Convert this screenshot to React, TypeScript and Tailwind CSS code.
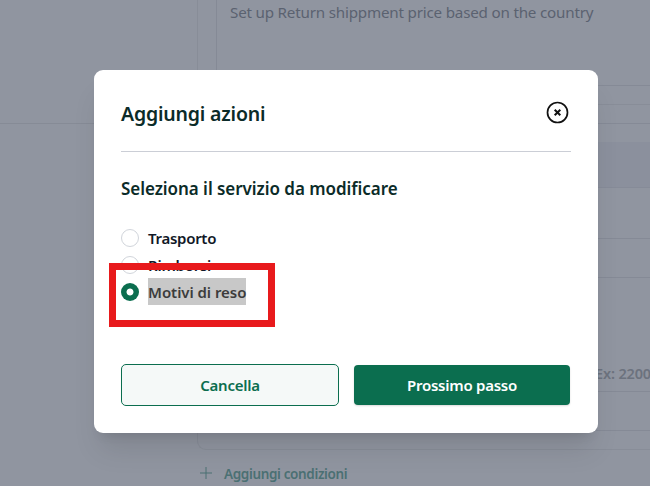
import { useState } from "react";

const services = [
  { id: "shipping", label: "Trasporto", text: "tracking-[-0.28px]" },
  { id: "refunds", label: "Rimborsi", text: "tracking-[-0.25px]" },
  { id: "reasons", label: "Motivi di reso", text: "tracking-[-0.05px]" },
];

function RulesPage() {
  return (
    <div className="flex h-full bg-[#9095a0]" aria-hidden="true">
      <div className="w-[197px] shrink-0">
        <div className="h-[124px] border-b border-[#868b96]" />
      </div>
      <div className="flex-1 min-w-0">
        <div className="h-[105px] border-l border-b border-[#888d98] pl-[18px]">
          <div className="h-[86px] border-l border-b border-[#858a96] pl-[13px]">
            <p className="text-[15.2px] leading-6 text-[#5b6270] whitespace-nowrap tracking-[-0.2px]">
              Set up Return shippment price based on the country
            </p>
          </div>
        </div>

        <div className="mt-[18px] h-[327px] rounded-bl-[9px] border-l border-y border-[#888d98] border-t-[#858a96]">
          <div className="mt-[18px] h-[46px] border-b border-[#868b98] bg-[#8b909d]" />
          <div className="mt-[50px] h-[40px] border-y border-[#858a96]" />
          <div className="mt-[83px] flex h-[30px] pl-[397px]">
            <span className="whitespace-nowrap text-[14.5px] font-semibold leading-6 tracking-[-0.15px] text-[#6c727e]">
              Ex: 2200
            </span>
          </div>
          <div className="h-[40px] border-y border-[#858a96]" />
        </div>

        <div className="mt-[12px] flex items-center pl-[3px] text-[#4b7073]">
          <svg className="-mt-[2px] w-3 h-3" viewBox="0 0 12 12" fill="none" stroke="currentColor">
            <path d="M6 0v12M0 6h12" />
          </svg>
          <span className="ml-[12px] whitespace-nowrap text-[13.5px] font-semibold leading-6 tracking-[-0.35px]">
            Aggiungi condizioni
          </span>
        </div>
      </div>
    </div>
  );
}

export default function App() {
  const [selected, setSelected] = useState("reasons");

  return (
    <div className="relative h-[486px] w-[650px] overflow-hidden font-['Noto_Sans',sans-serif]">
      <RulesPage />

      <div
        role="dialog"
        aria-modal="true"
        className="absolute left-[94px] top-[70px] h-[363px] w-[504px] rounded-[9px] bg-white px-[27px] shadow-[0_22px_28px_-6px_rgba(0,0,0,0.1),0_9px_11px_-7px_rgba(0,0,0,0.1)]"
      >
        <div className="flex h-[82px] items-center justify-between border-b border-[#cbced6] pt-1">
          <h1 className="mt-[3px] text-[19.5px] font-semibold leading-7 tracking-[-0.18px] text-[#0b2b28]">
            Aggiungi azioni
          </h1>
          <button type="button" aria-label="Chiudi" className="mr-[2px] -mt-[1px]">
            <svg className="w-[23px] h-[23px]" viewBox="0 0 23 23" fill="none" stroke="#111" strokeWidth="1.7">
              <circle cx="11.5" cy="11.5" r="10" />
              <path d="M8.7 8.7l5.6 5.6M14.3 8.7l-5.6 5.6" strokeWidth="2" />
            </svg>
          </button>
        </div>

        <h2 className="mt-[23px] text-[17px] font-semibold leading-7 tracking-[-0.05px] text-[#0b2b28]">
          Seleziona il servizio da modificare
        </h2>

        <div className="mt-[21px]">
          {services.map((service) => (
            <label key={service.id} className="flex h-[27px] items-center">
              <input
                type="radio"
                name="service"
                checked={selected === service.id}
                onChange={() => setSelected(service.id)}
                className="h-[18px] w-[18px] appearance-none rounded-full border border-[#d1d5db] bg-white checked:border-0 checked:bg-[radial-gradient(circle,#fff_3px,#0b6e4f_3.9px)]"
              />
              <span
                className={`ml-[9px] whitespace-nowrap pt-[2px] text-[15px] font-semibold leading-[25px] ${service.text} ${
                  selected === service.id ? "bg-[#c8c8c8] text-[#3c3c3c]" : "text-[#111827]"
                }`}
              >
                {service.label}
              </span>
            </label>
          ))}
        </div>

        <div className="mt-[59px] flex items-center gap-[15px]">
          <button
            type="button"
            className="h-[42px] w-[218px] rounded-[5px] border border-[#0b6e4f] bg-[#f5f9f8] text-[15px] font-semibold tracking-[-0.25px] text-[#0b6e4f]"
          >
            Cancella
          </button>
          <button
            type="button"
            className="h-[40px] w-[216px] rounded-[4px] bg-[#0b6e4f] text-[15px] font-semibold tracking-[-0.25px] text-white shadow-[0_1px_2px_rgba(0,0,0,0.15)]"
          >
            Prossimo passo
          </button>
        </div>
      </div>

      {/* highlight around the selected option */}
      <div className="pointer-events-none absolute left-[109px] top-[263px] h-[64px] w-[166px] border-[7px] border-[#e81a1c]" />
    </div>
  );
}
